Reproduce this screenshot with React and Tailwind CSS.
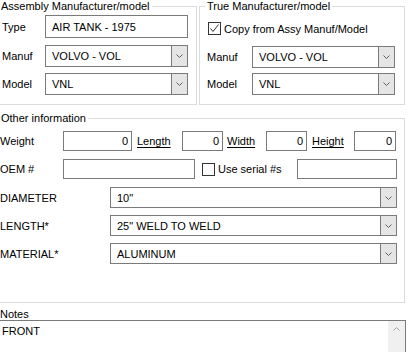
const FONT = "font-['Liberation_Sans',Arial,sans-serif]"

function Chevron({ up = false, color = '#606060' }) {
  return (
    <svg width="7" height="4" viewBox="0 0 7 4" className="block">
      <path
        d={up ? 'M0.5 3.5 L3.5 0.5 L6.5 3.5' : 'M0.5 0.5 L3.5 3.5 L6.5 0.5'}
        fill="none"
        stroke={color}
        strokeWidth="1"
      />
    </svg>
  )
}

function TextBox({ className = '', value = '', right = false }) {
  return (
    <div
      className={`flex items-center border border-[#7a7a7a] bg-white ${right ? 'justify-end pr-[3px]' : 'pl-[6px]'} ${className}`}
    >
      <span className="leading-[12px]">{value}</span>
    </div>
  )
}

function Combo({ className = '', value }) {
  return (
    <div className={`flex border border-[#7a7a7a] bg-white ${className}`}>
      <div className="flex flex-1 items-center pl-[6px]">
        <span className="leading-[12px]">{value}</span>
      </div>
      <div className="flex w-[16px] items-center justify-center border-l border-[#7a7a7a] bg-[#e5e5e5]">
        <Chevron />
      </div>
    </div>
  )
}

function CheckBox({ checked }) {
  return (
    <div className="flex h-[13px] w-[13px] items-center justify-center border border-[#333333] bg-white">
      {checked && (
        <svg width="11" height="11" viewBox="0 0 11 11" className="block">
          <path d="M1.5 5.5 L4 8.5 L9.5 1.5" fill="none" stroke="#333333" strokeWidth="1" />
        </svg>
      )}
    </div>
  )
}

function Group({ title, className = '', children }) {
  return (
    <fieldset className={`border border-[#dcdcdc] ${className}`}>
      <legend className="ml-[5px] px-[2px] leading-[12px]">{title}</legend>
      {children}
    </fieldset>
  )
}

function Label({ className = '', children, underline = false }) {
  return (
    <div className={`flex items-center ${className}`}>
      <span className={`leading-[12px] ${underline ? 'underline underline-offset-[2px]' : ''}`}>{children}</span>
    </div>
  )
}

export default function App() {
  return (
    <div className={`${FONT} relative h-[352px] w-[410px] overflow-hidden bg-white text-[11px] text-black`}>
      <div className="flex gap-[2px]">
        <Group title="Assembly Manufacturer/model" className="ml-[-7px] h-[105px] w-[204px]">
          <div className="flex flex-col pt-[3px]">
            <div className="flex h-[23px]">
              <Label className="w-[51px] pl-[8px]">Type</Label>
              <TextBox className="w-[143px]" value="AIR TANK - 1975" />
            </div>
            <div className="mt-[7px] flex h-[22px]">
              <Label className="w-[51px] pl-[8px]">Manuf</Label>
              <Combo className="w-[143px]" value="VOLVO - VOL" />
            </div>
            <div className="mt-[6px] flex h-[22px]">
              <Label className="w-[51px] pl-[8px]">Model</Label>
              <Combo className="w-[143px]" value="VNL" />
            </div>
          </div>
        </Group>

        <Group title="True Manufacturer/model" className="h-[105px] w-[206px]">
          <div className="flex flex-col pt-[10px]">
            <div className="flex h-[13px] items-center pl-[8px]">
              <CheckBox checked />
              <span className="ml-[3px] leading-[12px]">Copy from Assy Manuf/Model</span>
            </div>
            <div className="mt-[11px] flex h-[22px]">
              <Label className="w-[52px] pl-[7px]">Manuf</Label>
              <Combo className="w-[143px]" value="VOLVO - VOL" />
            </div>
            <div className="mt-[5px] flex h-[22px]">
              <Label className="w-[52px] pl-[7px]">Model</Label>
              <Combo className="w-[143px]" value="VNL" />
            </div>
          </div>
        </Group>
      </div>

      <Group title="Other information" className="ml-[-7px] mt-[7px] h-[191px] w-[412px]">
        <div className="flex flex-col pt-[7px] pr-[7px]">
          <div className="flex h-[20px]">
            <Label className="w-[69px] pl-[6px]">Weight</Label>
            <TextBox className="w-[69px]" value="0" right />
            <Label className="w-[50px] pl-[5px]" underline>Length</Label>
            <TextBox className="w-[41px]" value="0" right />
            <Label className="w-[43px] pl-[4px]" underline>Width</Label>
            <TextBox className="w-[41px]" value="0" right />
            <Label className="w-[47px] pl-[5px]" underline>Height</Label>
            <TextBox className="w-[42px]" value="0" right />
          </div>
          <div className="mt-[8px] flex h-[20px]">
            <Label className="w-[69px] pl-[6px]">OEM #</Label>
            <TextBox className="w-[132px]" />
            <div className="ml-[7px] flex items-center">
              <CheckBox />
              <span className="ml-[3px] leading-[12px]">Use serial #s</span>
            </div>
            <TextBox className="ml-auto w-[100px]" />
          </div>
          <div className="mt-[8px] flex flex-col gap-[7px]">
            <div className="flex h-[21px]">
              <Label className="w-[116px] pl-[6px]">DIAMETER</Label>
              <Combo className="flex-1" value={'10"'} />
            </div>
            <div className="flex h-[21px]">
              <Label className="w-[116px] pl-[6px]">LENGTH*</Label>
              <Combo className="flex-1" value={'25" WELD TO WELD'} />
            </div>
            <div className="flex h-[21px]">
              <Label className="w-[116px] pl-[6px]">MATERIAL*</Label>
              <Combo className="flex-1" value="ALUMINUM" />
            </div>
          </div>
        </div>
      </Group>

      <div className="ml-[-4px] mt-[5px] w-[410px]">
        <div className="h-[12px] pl-[4px] leading-[12px]">Notes</div>
        <div className="flex h-[60px] border border-[#7a7a7a] bg-white">
          <div className="flex-1 pl-[5px] pt-[4px] leading-[12px]">FRONT</div>
          <div className="flex w-[17px] justify-center bg-[#f0f0f0] pt-[6px]">
            <Chevron up color="#a3a3a3" />
          </div>
        </div>
      </div>
    </div>
  )
}
